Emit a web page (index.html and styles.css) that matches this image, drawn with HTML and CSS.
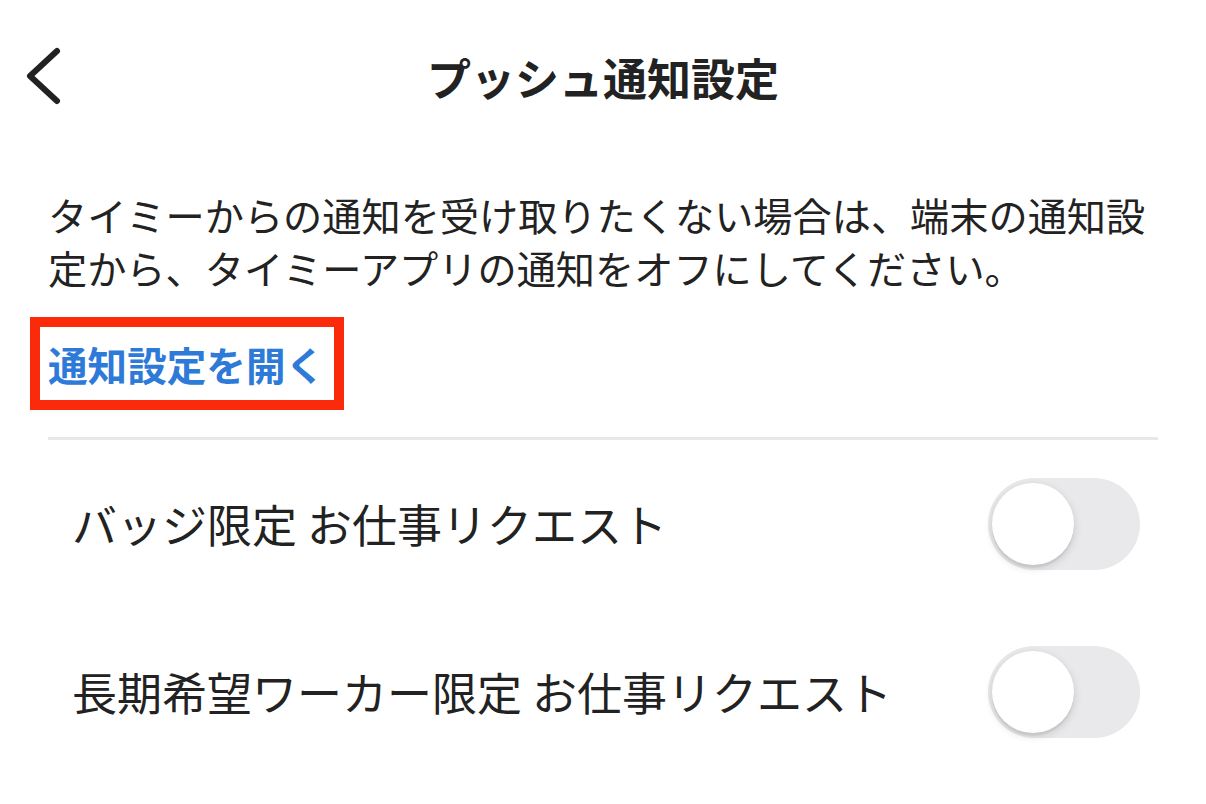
FILE: index.html
```html
<!DOCTYPE html>
<html lang="ja">
<head>
<meta charset="utf-8">
<title>プッシュ通知設定</title>
<link rel="stylesheet" href="styles.css">
</head>
<body>
<div class="screen">
  <header class="header">
    <div class="back">
      <svg class="back-icon" width="38" height="60" viewBox="0 0 38 60" fill="none">
        <path d="M33 5 L6 30 L33 55" stroke="#222" stroke-width="6" stroke-linecap="round" stroke-linejoin="round"/>
      </svg>
    </div>
    <h1 class="title">プッシュ通知設定</h1>
    <div class="spacer"></div>
  </header>
  <section class="intro">
    <p class="desc">タイミーからの通知を受け取りたくない場合は、端末の通知設定から、タイミーアプリの通知をオフにしてください。</p>
    <div class="highlight"><a class="link">通知設定を開く</a></div>
    <div class="divider"></div>
  </section>
  <ul class="list">
    <li class="row"><span class="label">バッジ限定 お仕事リクエスト</span><span class="toggle"><span class="knob"></span></span></li>
    <li class="row"><span class="label">長期希望ワーカー限定 お仕事リクエスト</span><span class="toggle"><span class="knob"></span></span></li>
  </ul>
</div>
</body>
</html>
```
FILE: styles.css
```css
* { box-sizing: border-box; }
html, body { margin: 0; padding: 0; background: #fff; }
body {
  font-family: "Noto Sans CJK JP", "Noto Sans", sans-serif;
  color: #222;
}
.screen { width: 1206px; height: 804px; overflow: hidden; }
.header {
  height: 154px;
  display: grid;
  grid-template-columns: 1fr auto 1fr;
  align-items: center;
}
.back { padding-left: 24px; display: flex; align-items: center; }
.back-icon { display: block; margin-top: -2px; }
.title {
  margin: 0;
  font-size: 44px;
  line-height: 60px;
  font-weight: 700;
  color: #222;
  letter-spacing: 0;
}
.intro { padding: 34px 48px 0 48px; }
.desc {
  margin: 0;
  font-size: 39.2px;
  line-height: 53px;
  color: #222;
}
.highlight {
  display: inline-block;
  margin: 23px 0 0 -18px;
  border: 10px solid #fb2a0a;
  padding: 0 9px 0 8px;
}
.link {
  display: block;
  font-size: 39.6px;
  line-height: 73px;
  font-weight: 700;
  color: #2e7ad9;
}
.divider {
  margin-top: 27px;
  height: 3px;
  background: #e8e8ea;
}
.list { list-style: none; margin: 0; padding: 0; }
.row {
  height: 168px;
  display: flex;
  align-items: center;
  justify-content: space-between;
  padding: 0 66px 0 72px;
}
.label {
  font-size: 45px;
  line-height: 60px;
  color: #222;
}
.toggle {
  position: relative;
  width: 152px;
  height: 92px;
  border-radius: 46px;
  background: #e9e9eb;
  flex: none;
}
.knob {
  position: absolute;
  left: 4px;
  top: 5px;
  width: 82px;
  height: 82px;
  border-radius: 50%;
  background: #fff;
  box-shadow: 0 3px 8px rgba(0,0,0,0.15), 0 3px 1px rgba(0,0,0,0.05);
}
```
